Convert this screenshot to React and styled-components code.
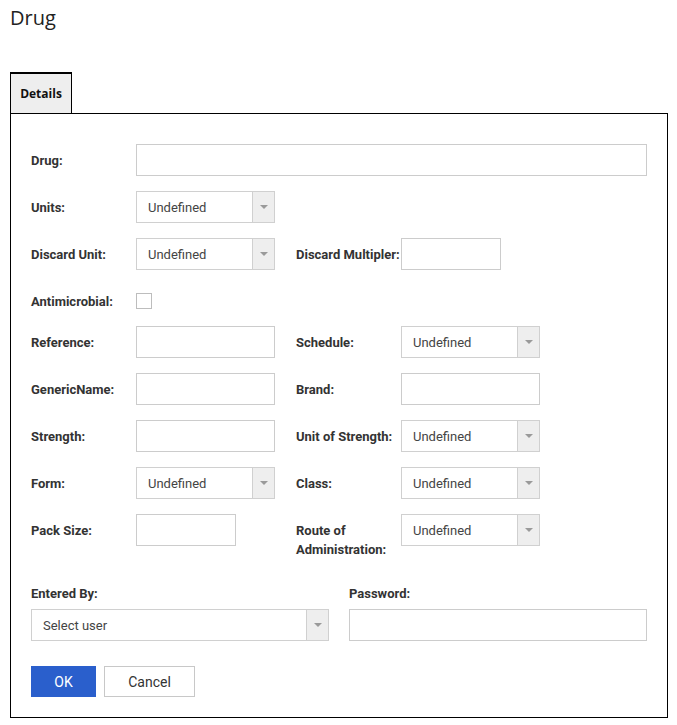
import React from "react";
import styled, { createGlobalStyle } from "styled-components";

const GlobalStyle = createGlobalStyle`
  body {
    margin: 0;
    background: #fff;
    font-family: Roboto, "Liberation Sans", sans-serif;
  }
`;

const Page = styled.div`
  padding: 3px 10px 0 10px;
  width: 658px;
`;

const Title = styled.h1`
  margin: 0 0 40px 0;
  font-family: "Open Sans", sans-serif;
  font-weight: 400;
  font-size: 20px;
  line-height: 29px;
  color: #222;
`;

const Tabs = styled.div`
  display: flex;
`;

const Tab = styled.div`
  width: 60px;
  height: 39px;
  border: 1px solid #000;
  border-top: 2px solid #000;
  border-bottom: none;
  background: #eeeeee;
  font-family: "Open Sans", sans-serif;
  font-weight: 700;
  font-size: 12px;
  color: #111;
  display: flex;
  align-items: center;
  justify-content: center;
  box-sizing: content-box;
`;

const Panel = styled.div`
  border: 1px solid #000;
  padding: 30px 20px 20px 20px;
  width: 616px;
`;

const Row = styled.div`
  display: flex;
  align-items: flex-start;
  margin-bottom: ${(p) => p.$after ?? 15}px;
`;

const Field = styled.div`
  display: flex;
  align-items: flex-start;
  width: ${(p) => p.$w || "auto"};
`;

const Label = styled.label`
  width: ${(p) => p.$w || 105}px;
  flex-shrink: 0;
  padding-top: 7px;
  font-size: 13px;
  font-weight: 700;
  line-height: 19px;
  color: #333;
  white-space: ${(p) => (p.$wrap ? "normal" : "nowrap")};
`;

const TextBox = styled.div`
  box-sizing: border-box;
  height: 32px;
  width: ${(p) => p.$w}px;
  border: 1px solid #cccccc;
  background: #fff;
`;

const Select = styled.div`
  box-sizing: border-box;
  height: 32px;
  width: ${(p) => p.$w}px;
  border: 1px solid #d0d0d0;
  display: flex;
  background: #fff;
`;

const SelectValue = styled.div`
  flex: 1;
  padding-left: 11px;
  font-size: 13px;
  line-height: 31px;
  color: #444;
`;

const Arrow = styled.div`
  width: 21px;
  border-left: 1px solid #d0d0d0;
  background: #eeeeee;
  display: flex;
  align-items: center;
  justify-content: center;
  &::after {
    content: "";
    border-left: 4px solid transparent;
    border-right: 4px solid transparent;
    border-top: 4px solid #9a9a9a;
  }
`;

const CheckBox = styled.div`
  box-sizing: border-box;
  width: 16px;
  height: 16px;
  margin-top: 8px;
  border: 1px solid #bdbdbd;
  background: #fff;
`;

const Bottom = styled.div`
  display: grid;
  grid-template-columns: 298px 298px;
  column-gap: 20px;
  margin-bottom: 25px;
`;

const StackLabel = styled.div`
  font-size: 13px;
  font-weight: 700;
  line-height: 16px;
  color: #333;
  margin-bottom: 7px;
`;

const Buttons = styled.div`
  display: flex;
  gap: 8px;
`;

const Button = styled.button`
  box-sizing: border-box;
  height: 31px;
  width: ${(p) => p.$w}px;
  font-family: Roboto, "Liberation Sans", sans-serif;
  font-size: 14px;
  font-weight: 400;
  border: 1px solid ${(p) => (p.$primary ? "#2a5fcc" : "#c8c8c8")};
  background: ${(p) => (p.$primary ? "#2a5fcc" : "#fff")};
  color: ${(p) => (p.$primary ? "#fff" : "#333")};
  padding: 0;
`;

const Dropdown = ({ w, value = "Undefined" }) => (
  <Select $w={w}>
    <SelectValue>{value}</SelectValue>
    <Arrow />
  </Select>
);

const App = () => {
  return (
    <Page>
      <GlobalStyle />
      <Title>Drug</Title>
      <Tabs>
        <Tab>Details</Tab>
      </Tabs>
      <Panel>
        <Row>
          <Label>Drug:</Label>
          <TextBox $w={511} />
        </Row>
        <Row>
          <Label>Units:</Label>
          <Dropdown w={139} />
        </Row>
        <Row>
          <Field $w="265px">
            <Label>Discard Unit:</Label>
            <Dropdown w={139} />
          </Field>
          <Field>
            <Label $w={105}>Discard Multipler:</Label>
            <TextBox $w={100} />
          </Field>
        </Row>
        <Row $after={15}>
          <Label>Antimicrobial:</Label>
          <CheckBox />
        </Row>
        <Row>
          <Field $w="265px">
            <Label>Reference:</Label>
            <TextBox $w={139} />
          </Field>
          <Field>
            <Label>Schedule:</Label>
            <Dropdown w={139} />
          </Field>
        </Row>
        <Row>
          <Field $w="265px">
            <Label>GenericName:</Label>
            <TextBox $w={139} />
          </Field>
          <Field>
            <Label>Brand:</Label>
            <TextBox $w={139} />
          </Field>
        </Row>
        <Row>
          <Field $w="265px">
            <Label>Strength:</Label>
            <TextBox $w={139} />
          </Field>
          <Field>
            <Label>Unit of Strength:</Label>
            <Dropdown w={139} />
          </Field>
        </Row>
        <Row>
          <Field $w="265px">
            <Label>Form:</Label>
            <Dropdown w={139} />
          </Field>
          <Field>
            <Label>Class:</Label>
            <Dropdown w={139} />
          </Field>
        </Row>
        <Row $after={27}>
          <Field $w="265px">
            <Label>Pack Size:</Label>
            <TextBox $w={100} />
          </Field>
          <Field>
            <Label $wrap>Route of Administration:</Label>
            <Dropdown w={139} />
          </Field>
        </Row>
        <Bottom>
          <div>
            <StackLabel>Entered By:</StackLabel>
            <Dropdown w={298} value="Select user" />
          </div>
          <div>
            <StackLabel>Password:</StackLabel>
            <TextBox $w={298} />
          </div>
        </Bottom>
        <Buttons>
          <Button $primary $w={65}>OK</Button>
          <Button $w={91}>Cancel</Button>
        </Buttons>
      </Panel>
    </Page>
  );
};

export default App;
